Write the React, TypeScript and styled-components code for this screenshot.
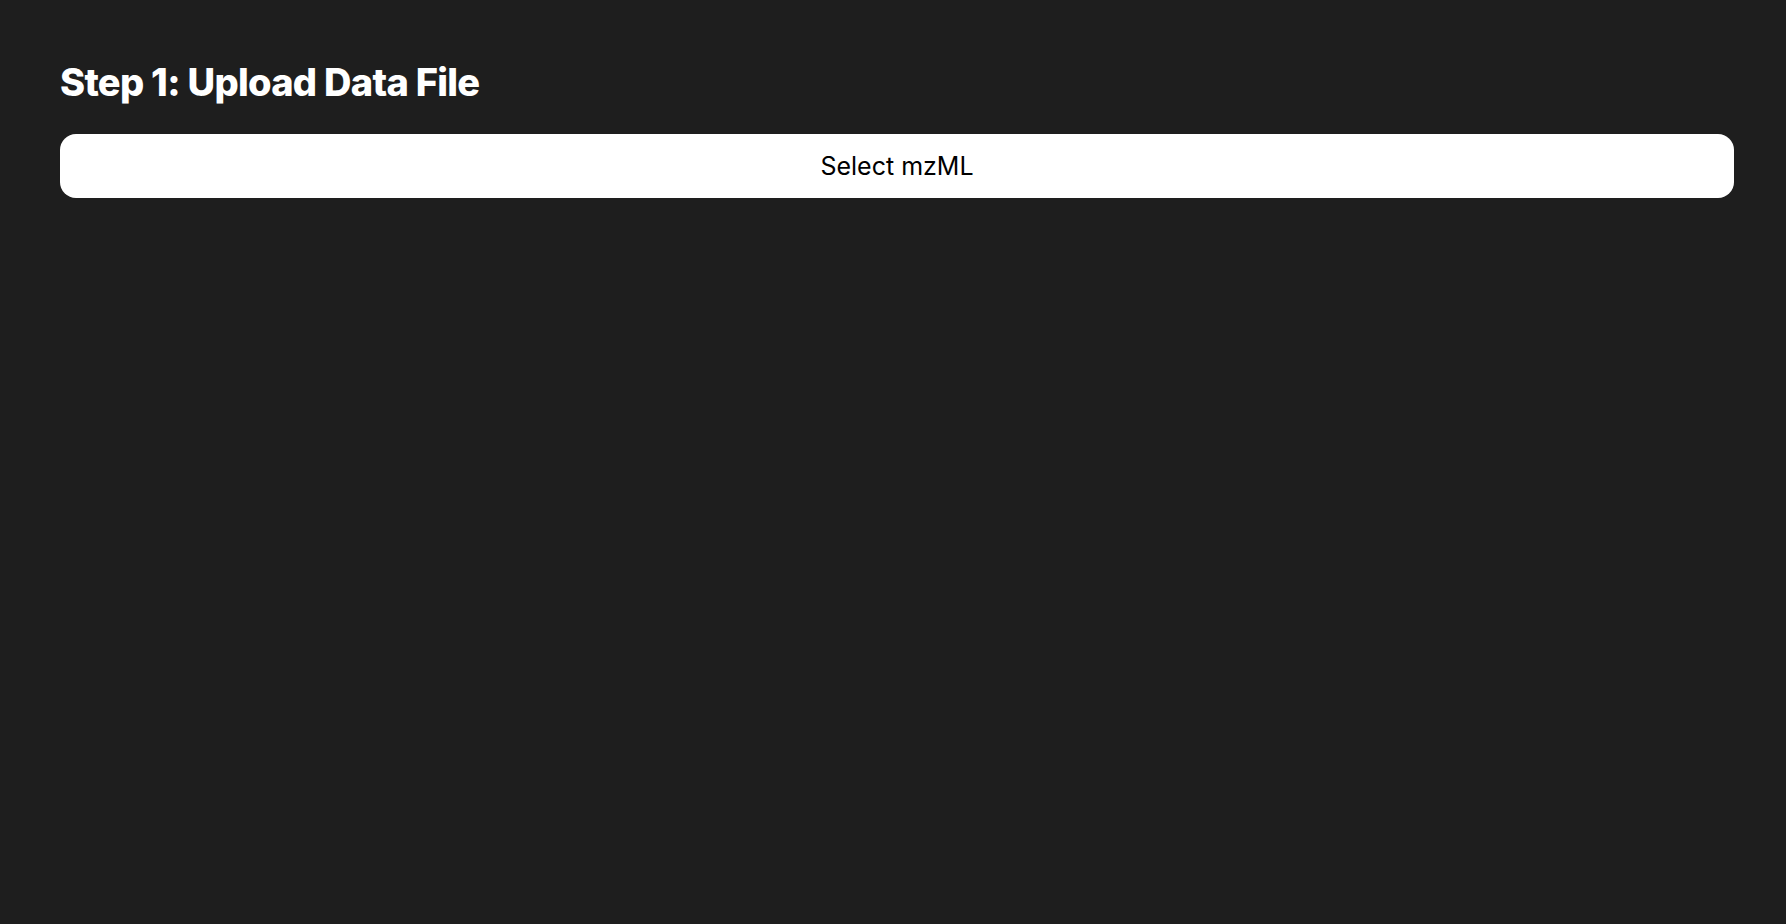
import * as React from 'react';
import styled, { createGlobalStyle } from 'styled-components';

const GlobalStyle = createGlobalStyle`
  html, body {
    margin: 0;
    padding: 0;
    background: #1e1e1e;
    font-family: Inter, "Noto Sans", sans-serif;
  }
`;

const Page = styled.main`
  min-height: 100vh;
  box-sizing: border-box;
  padding: 58px 52px 0 60px;
  display: flex;
  flex-direction: column;
  gap: 28px;
`;

const Title = styled.h1`
  margin: 0;
  color: #ffffff;
  font-size: 38px;
  font-weight: 800;
  line-height: 48px;
  letter-spacing: -0.7px;
`;

const UploadButton = styled.button`
  width: 100%;
  height: 64px;
  border: none;
  border-radius: 16px;
  background: #ffffff;
  color: #000000;
  font-family: Inter, "Noto Sans", sans-serif;
  font-size: 25px;
  font-weight: 400;
  cursor: pointer;
`;

export default function App() {
  return (
    <>
      <GlobalStyle />
      <Page>
        <Title>Step 1: Upload Data File</Title>
        <UploadButton>Select mzML</UploadButton>
      </Page>
    </>
  );
}
